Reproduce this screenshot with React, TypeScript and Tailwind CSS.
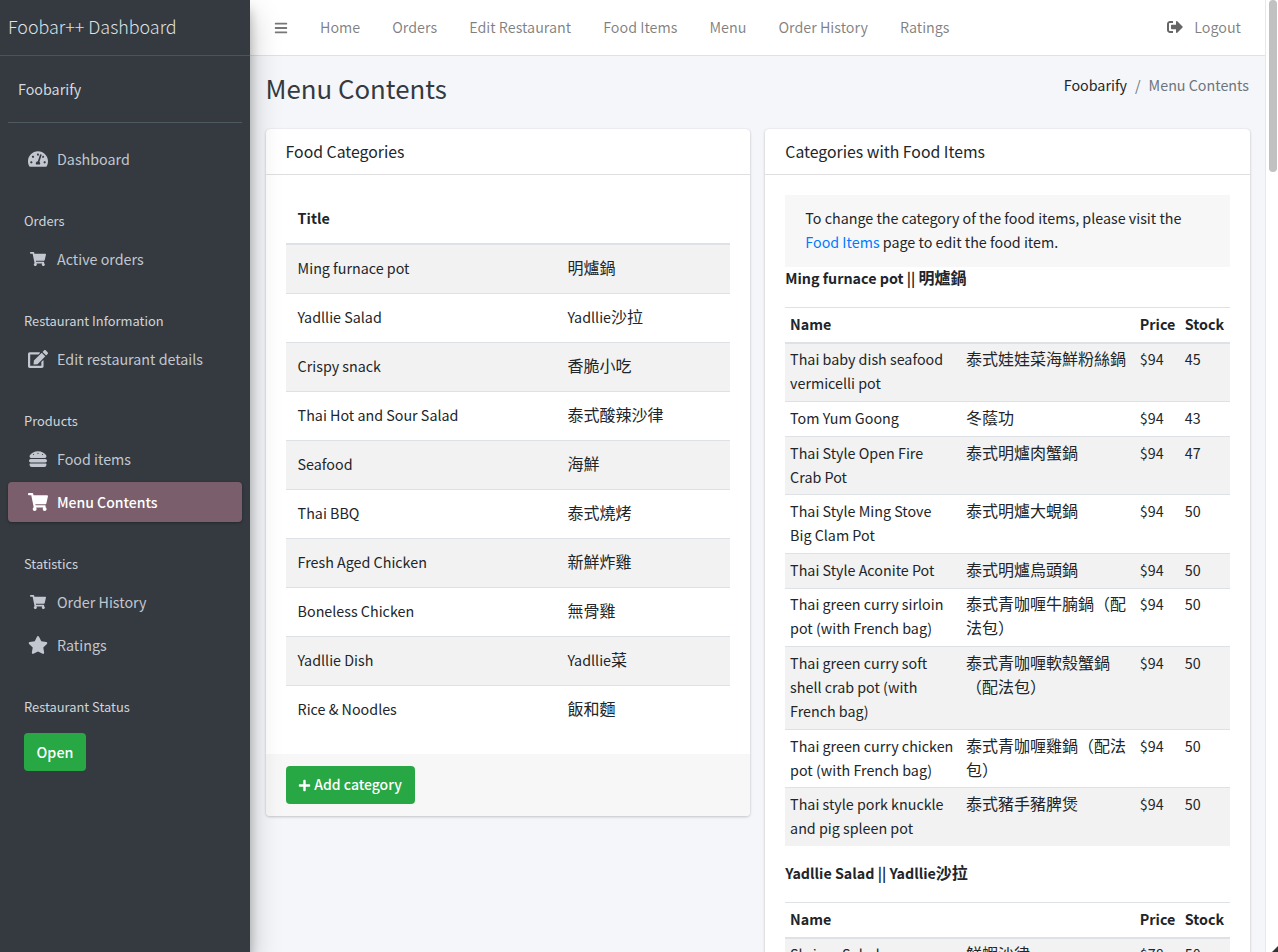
import React from "react";
import { FaTachometerAlt, FaShoppingCart, FaEdit, FaHamburger, FaStar, FaSignOutAlt, FaPlus, FaBars } from "react-icons/fa";

const cats: [string, string][] = [
  ["Ming furnace pot", "明爐鍋"],
  ["Yadllie Salad", "Yadllie沙拉"],
  ["Crispy snack", "香脆小吃"],
  ["Thai Hot and Sour Salad", "泰式酸辣沙律"],
  ["Seafood", "海鮮"],
  ["Thai BBQ", "泰式燒烤"],
  ["Fresh Aged Chicken", "新鮮炸雞"],
  ["Boneless Chicken", "無骨雞"],
  ["Yadllie Dish", "Yadllie菜"],
  ["Rice & Noodles", "飯和麵"],
];

const items: [string, string, string, string][] = [
  ["Thai baby dish seafood vermicelli pot", "泰式娃娃菜海鮮粉絲鍋", "$94", "45"],
  ["Tom Yum Goong", "冬蔭功", "$94", "43"],
  ["Thai Style Open Fire Crab Pot", "泰式明爐肉蟹鍋", "$94", "47"],
  ["Thai Style Ming Stove Big Clam Pot", "泰式明爐大蜆鍋", "$94", "50"],
  ["Thai Style Aconite Pot", "泰式明爐烏頭鍋", "$94", "50"],
  ["Thai green curry sirloin pot (with French bag)", "泰式青咖喱牛腩鍋（配法包）", "$94", "50"],
  ["Thai green curry soft shell crab pot (with French bag)", "泰式青咖喱軟殼蟹鍋（配法包）", "$94", "50"],
  ["Thai green curry chicken pot (with French bag)", "泰式青咖喱雞鍋（配法包）", "$94", "50"],
  ["Thai style pork knuckle and pig spleen pot", "泰式豬手豬脾煲", "$94", "50"],
];

function T({ children }: { children: string }) {
  const parts = children.split(/([\u3000-\u9fff\uff00-\uffef]+)/);
  return (
    <>
      {parts.map((p, i) =>
        i % 2 === 1 ? (
          <span key={i} className="text-[16px] leading-none">{p}</span>
        ) : (
          <React.Fragment key={i}>{p}</React.Fragment>
        )
      )}
    </>
  );
}

function NavItem({ icon, label, active }: { icon: React.ReactNode; label: string; active?: boolean }) {
  return (
    <div
      className={
        active
          ? "flex h-[40px] items-center rounded bg-[#7b5e6b] text-[14px] font-medium text-white shadow-[0_1px_3px_rgba(0,0,0,0.3)]"
          : "flex h-[40px] items-center rounded text-[#c2c7d0]"
      }
    >
      <span className="flex w-[49px] shrink-0 justify-center pl-[10px]">{icon}</span>
      <span>{label}</span>
    </div>
  );
}

function SectionLabel({ children }: { children: React.ReactNode }) {
  return <div className="pl-[16px] pt-[30px] pb-[6px] text-[12.9px] leading-6 text-[#d0d4db]">{children}</div>;
}

function Sidebar() {
  return (
    <aside className="z-10 h-[952px] w-[250px] shrink-0 bg-[#343a40] shadow-[0_14px_28px_rgba(0,0,0,0.25),0_10px_10px_rgba(0,0,0,0.22)]">
      <div className="flex h-[56px] items-center border-b border-[#4b545c] pb-[3px] pl-[8px] text-[17.9px] font-light text-[#dfe1e4]">
        Foobar++ Dashboard
      </div>
      <div className="px-[8px]">
        <div className="flex h-[67px] items-center border-b border-[#4f5962] pl-[10px] text-[#d6d8db]">Foobarify</div>
        <div className="pt-[16px]">
          <NavItem icon={<FaTachometerAlt className="text-[20px]" />} label="Dashboard" />
          <SectionLabel>Orders</SectionLabel>
          <NavItem icon={<FaShoppingCart className="text-[16px]" />} label="Active orders" />
          <SectionLabel>Restaurant Information</SectionLabel>
          <NavItem icon={<FaEdit className="text-[20px]" />} label="Edit restaurant details" />
          <SectionLabel>Products</SectionLabel>
          <NavItem icon={<FaHamburger className="text-[18px]" />} label="Food items" />
          <div className="h-[3px]" />
          <NavItem active icon={<FaShoppingCart className="text-[20px]" />} label="Menu Contents" />
          <SectionLabel>Statistics</SectionLabel>
          <NavItem icon={<FaShoppingCart className="text-[16px]" />} label="Order History" />
          <div className="h-[3px]" />
          <NavItem icon={<FaStar className="text-[20px]" />} label="Ratings" />
          <SectionLabel>Restaurant Status</SectionLabel>
          <div className="pl-[16px] pt-[8px]">
            <div className="flex h-[38px] w-[62px] items-center justify-center rounded bg-[#28a745] font-medium text-white">Open</div>
          </div>
        </div>
      </div>
    </aside>
  );
}

function TopNav() {
  return (
    <nav className="flex h-[56px] shrink-0 items-center border-b border-[#dee2e6] bg-white text-[rgba(0,0,0,0.5)]">
      <FaBars className="ml-[24px] text-[14px] text-[#777]" />
      <div className="ml-[32px] flex gap-[32px] pb-[2px]">
        {["Home", "Orders", "Edit Restaurant", "Food Items", "Menu", "Order History", "Ratings"].map((t) => (
          <span key={t}>{t}</span>
        ))}
      </div>
      <div className="ml-auto mr-[24px] flex items-center pb-[2px]">
        <FaSignOutAlt className="mr-[11px] text-[16px] text-[#666]" />
        <span>Logout</span>
      </div>
    </nav>
  );
}

function Card({ title, children }: { title: string; children: React.ReactNode }) {
  return (
    <section className="rounded bg-white shadow-[0_0_1px_rgba(0,0,0,0.125),0_1px_3px_rgba(0,0,0,0.2)]">
      <header className="flex h-[46px] items-center border-b border-[rgba(0,0,0,0.125)] px-[20px] text-[15.8px] text-[#212529]">{title}</header>
      {children}
    </section>
  );
}

function FoodTable({ rows }: { rows: [string, string, string, string][] }) {
  return (
    <table className="mb-[16px] w-full table-fixed border-collapse">
      <colgroup>
        <col className="w-[176px]" />
        <col />
        <col className="w-[45px]" />
        <col className="w-[50px]" />
      </colgroup>
      <thead>
        <tr className="border-t border-b-2 border-[#dee2e6]">
          <th className="px-[4.8px] pt-[3.8px] pb-[5.8px] text-left font-bold">Name</th>
          <th />
          <th className="px-[4.8px] pt-[3.8px] pb-[5.8px] text-left font-bold">Price</th>
          <th className="px-[4.8px] pt-[3.8px] pb-[5.8px] text-left font-bold">Stock</th>
        </tr>
      </thead>
      <tbody>
        {rows.map((r, i) => (
          <tr key={i} className={(i % 2 === 0 ? "bg-[#f2f2f2] " : "") + "border-t border-[#dee2e6] align-top"}>
            {r.map((c, j) => (
              <td key={j} className={j === 0 ? "pl-[4.8px] pr-[7px] pt-[3.8px] pb-[5.8px]" : "px-[4.8px] pt-[3.8px] pb-[5.8px]"}>
                <T>{c}</T>
              </td>
            ))}
          </tr>
        ))}
      </tbody>
    </table>
  );
}

function Content() {
  return (
    <main className="min-w-0 flex-1 bg-[#f4f6f9] pl-[15.6px] pr-[15px]">
      <div className="flex h-[73px] items-center justify-between pb-[8px]">
        <h1 className="text-[25.8px] leading-[1.2] text-[#343a40]">Menu Contents</h1>
        <div className="mb-[8px] mr-[1px] flex items-center">
          <span className="text-[#212529]">Foobarify</span>
          <span className="px-[8px] text-[#6c757d]">/</span>
          <span className="text-[#6c757d]">Menu Contents</span>
        </div>
      </div>
      <div className="grid grid-cols-2 items-start gap-[15px]">
        <Card title="Food Categories">
          <div className="p-[20px]">
            <table className="w-full table-fixed border-collapse">
              <colgroup>
                <col className="w-[270px]" />
                <col />
              </colgroup>
              <thead>
                <tr className="border-b-2 border-[#dee2e6]">
                  <th className="px-[12px] pt-[11px] pb-[13px] text-left font-bold" colSpan={2}>Title</th>
                </tr>
              </thead>
              <tbody>
                {cats.map(([a, b], i) => (
                  <tr key={a} className={(i % 2 === 0 ? "bg-[#f2f2f2] " : "") + "border-t border-[#dee2e6]"}>
                    <td className="px-[12px] pt-[11px] pb-[13px]">{a}</td>
                    <td className="px-[12px] pt-[11px] pb-[13px]"><T>{b}</T></td>
                  </tr>
                ))}
              </tbody>
            </table>
          </div>
          <footer className="rounded-b bg-[#f7f7f7] px-[20px] py-[12px]">
            <div className="flex h-[38px] w-[129px] items-center justify-center gap-[3px] rounded bg-[#28a745] pb-[2px] text-[14px] font-medium text-white">
              <FaPlus className="mt-[2px] text-[13px]" />
              <span>Add category</span>
            </div>
          </footer>
        </Card>
        <Card title="Categories with Food Items">
          <div className="p-[20px]">
            <div className="bg-[#f7f7f7] px-[20px] pt-[11px] pb-[13px]">
              To change the category of the food items, please visit the{" "}
              <span className="text-[#007bff]">Food Items</span> page to edit the food item.
            </div>
            <h6 className="-mt-[1px] mb-[17px] font-bold"><T>Ming furnace pot || 明爐鍋</T></h6>
            <FoodTable rows={items} />
            <h6 className="-mt-[1px] mb-[17px] font-bold"><T>Yadllie Salad || Yadllie沙拉</T></h6>
            <FoodTable rows={[["Shrimp Salad", "鮮蝦沙律", "$78", "50"]]} />
          </div>
        </Card>
      </div>
    </main>
  );
}

export default function App() {
  return (
    <div className="relative flex h-[952px] overflow-hidden font-['Noto_Sans_CJK_TC','Noto_Sans',sans-serif] text-[14.3px] leading-6 text-[#212529]">
      <Sidebar />
      <div className="flex min-w-0 flex-1 flex-col">
        <TopNav />
        <Content />
      </div>
      <div className="w-[13px] shrink-0 border-l border-[#e8e8e8] bg-white pl-[3px] pr-[1px]">
        <div className="h-[172px] rounded-full bg-[#c1c1c1]" />
      </div>
      <svg className="absolute bottom-0 right-0 h-[6px] w-[6px]" viewBox="0 0 6 6">
        <polygon points="6,0 6,6 0,6" fill="#333" />
      </svg>
    </div>
  );
}
